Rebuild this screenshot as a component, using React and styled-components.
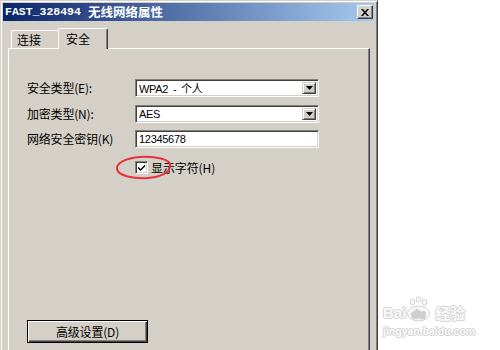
import React from 'react'
import styled, { createGlobalStyle } from 'styled-components'

const GlobalStyle = createGlobalStyle`
	html, body {
		margin: 0;
		padding: 0;
		background: #ffffff;
		overflow: hidden;
	}
	* {
		box-sizing: border-box;
	}
`

const FONT = `"Liberation Sans", "Noto Sans CJK SC", sans-serif`

const Page = styled.div`
	position: relative;
	width: 500px;
	height: 350px;
	overflow: hidden;
	font-family: ${FONT};
	font-size: 12px;
	color: #000;
`

const Window = styled.div`
	width: 378px;
	height: 370px;
	display: flex;
	flex-direction: column;
	background: #d4d0c8;
	border-top: 1px solid #d4d0c8;
	border-left: 1px solid #d4d0c8;
	border-right: 1px solid #404040;
	box-shadow: inset 1px 1px #ffffff, inset -1px 0 #808080;
	padding: 2px 3px 0 2px;
`

const TitleBar = styled.div`
	height: 18px;
	display: flex;
	align-items: center;
	justify-content: space-between;
	padding: 0 1px 0 2px;
	background: linear-gradient(to right, #0a246a, #a6caf0);
`

const Title = styled.div`
	display: flex;
	align-items: center;
	gap: 7px;
	color: #ffffff;
	font-weight: bold;
	line-height: 18px;
`

const TitleLatin = styled.span`
	font-family: "Liberation Mono", monospace;
	font-size: 11.5px;
`

const TitleCjk = styled.span`
	font-family: "Noto Sans CJK SC", sans-serif;
	font-size: 12.5px;
`

const CloseButton = styled.div`
	width: 16px;
	height: 14px;
	display: flex;
	align-items: center;
	justify-content: center;
	background: #d4d0c8;
	border-top: 1px solid #ffffff;
	border-left: 1px solid #ffffff;
	border-right: 1px solid #404040;
	border-bottom: 1px solid #404040;
	box-shadow: inset -1px -1px #808080;
`

const TabStrip = styled.div`
	display: flex;
	align-items: flex-end;
	height: 20px;
	margin-top: 7px;
	padding-left: 8px;
	position: relative;
	z-index: 1;
`

const Tab = styled.div`
	height: ${p => (p.active ? 21 : 18)}px;
	width: ${p => (p.active ? 50 : 47)}px;
	margin-bottom: ${p => (p.active ? -1 : 0)}px;
	display: flex;
	align-items: center;
	padding: 0 0 ${p => (p.active ? 2 : 0)}px ${p => (p.active ? 7 : 5)}px;
	background: #d4d0c8;
	border-top: 1px solid #ffffff;
	border-left: 1px solid #ffffff;
	border-right: ${p => (p.active ? '1px solid #404040' : 'none')};
	box-shadow: ${p => (p.active ? 'inset -1px 0 #808080' : 'none')};
	border-radius: 2px 2px 0 0;
	font-family: "Noto Sans CJK SC", sans-serif;
	font-size: 12px;
`

const Panel = styled.div`
	flex: 1;
	margin-left: 5px;
	width: 362px;
	display: flex;
	flex-direction: column;
	border-top: 1px solid #ffffff;
	border-left: 1px solid #ffffff;
	border-right: 1px solid #404040;
	box-shadow: inset -1px 0 #808080;
	padding: 30px 0 0 18px;
`

const Form = styled.div`
	display: grid;
	grid-template-columns: 108px 184px;
	grid-auto-rows: 18px;
	row-gap: 7.5px;
	align-items: center;
`

const Label = styled.div`
	font-family: "Noto Sans CJK SC", sans-serif;
	font-size: 12px;
	line-height: 18px;
	white-space: nowrap;
	letter-spacing: -0.2px;
`

const Field = styled.div`
	height: 18px;
	display: flex;
	align-items: center;
	justify-content: space-between;
	background: #ffffff;
	border-top: 1px solid #808080;
	border-left: 1px solid #808080;
	border-right: 1px solid #ffffff;
	border-bottom: 1px solid #ffffff;
	box-shadow: inset 1px 1px #404040, inset -1px -1px #d4d0c8;
	padding: 0 2px 0 3px;
	font-family: "Liberation Sans", "Noto Sans CJK SC", sans-serif;
	font-size: 11px;
	letter-spacing: -0.3px;
	word-spacing: 2px;
`

const DropButton = styled.div`
	width: 14px;
	height: 12px;
	display: flex;
	align-items: center;
	justify-content: center;
	background: #d4d0c8;
	border-top: 1px solid #d4d0c8;
	border-left: 1px solid #d4d0c8;
	border-right: 1px solid #404040;
	border-bottom: 1px solid #404040;
	box-shadow: inset 1px 1px #ffffff, inset -1px -1px #808080;
`

const CheckRow = styled.div`
	position: relative;
	display: flex;
	align-items: center;
	gap: 3px;
	margin: 13px 0 0 108px;
	height: 13px;
`

const CheckBox = styled.div`
	width: 13px;
	height: 13px;
	display: flex;
	align-items: center;
	justify-content: center;
	background: #ffffff;
	border-top: 1px solid #808080;
	border-left: 1px solid #808080;
	border-right: 1px solid #ffffff;
	border-bottom: 1px solid #ffffff;
	box-shadow: inset 1px 1px #404040, inset -1px -1px #d4d0c8;
`

const CheckLabel = styled.span`
	font-family: "Noto Sans CJK SC", sans-serif;
	font-size: 12px;
	letter-spacing: -0.1px;
`

const Circle = styled.svg`
	position: absolute;
	left: -21px;
	top: -7px;
	overflow: visible;
	pointer-events: none;
`

const PushButton = styled.div`
	width: 121px;
	height: 23px;
	margin-top: 146px;
	display: flex;
	align-items: center;
	justify-content: center;
	border: 1px solid #000000;
	box-shadow: inset 1px 1px #ffffff, inset -1px -1px #404040, inset -2px -2px #808080;
	font-family: "Noto Sans CJK SC", sans-serif;
	font-size: 12px;
	letter-spacing: -0.2px;
`

const OUTLINE = '1px 0 #d4d4d4, -1px 0 #d4d4d4, 0 1px #d4d4d4, 0 -1px #d4d4d4'

const Watermark = styled.div`
	position: absolute;
	left: 383px;
	top: 296px;
	display: flex;
	flex-direction: column;
	color: #fafafa;
	text-shadow: ${OUTLINE};
`

const WatermarkLogo = styled.div`
	display: flex;
	align-items: flex-end;
	font-family: "Liberation Sans", sans-serif;
	font-weight: bold;
	font-size: 15px;
	line-height: 18px;
`

const WatermarkSub = styled.span`
	font-family: "Noto Sans CJK SC", sans-serif;
	font-weight: bold;
	font-size: 15px;
	line-height: 18px;
	margin-left: 4px;
`

const WatermarkUrl = styled.div`
	font-family: "Liberation Sans", sans-serif;
	font-weight: bold;
	font-size: 10.5px;
	margin-top: 3px;
`

const Paw = () => (
	<svg width="25" height="26" viewBox="0 0 25 26">
		<g fill="#fafafa" stroke="#cfcfcf" strokeWidth="1">
			<ellipse cx="6.5" cy="6" rx="2.3" ry="2.8" />
			<ellipse cx="12.5" cy="3.5" rx="2.3" ry="2.8" />
			<ellipse cx="18.5" cy="6" rx="2.3" ry="2.8" />
			<ellipse cx="12.5" cy="17.5" rx="11" ry="7.5" />
		</g>
		<text x="12.5" y="21.5" textAnchor="middle" fontFamily="Liberation Sans, sans-serif" fontWeight="bold" fontSize="11" fill="#fafafa" stroke="#c8c8c8" strokeWidth="0.6">du</text>
	</svg>
)

const Arrow = () => (
	<DropButton>
		<svg width="7" height="4" viewBox="0 0 7 4">
			<path d="M0 0h7L3.5 4z" fill="#000" />
		</svg>
	</DropButton>
)

const App = () => (
	<Page>
		<GlobalStyle />
		<Window>
			<TitleBar>
				<Title>
					<TitleLatin>FAST_328494</TitleLatin>
					<TitleCjk>无线网络属性</TitleCjk>
				</Title>
				<CloseButton>
					<svg width="8" height="7" viewBox="0 0 8 7">
						<path d="M0 0h2l2 2.5L6 0h2L5 3.5 8 7H6L4 4.5 2 7H0l3-3.5z" fill="#000" />
					</svg>
				</CloseButton>
			</TitleBar>
			<TabStrip>
				<Tab>连接</Tab>
				<Tab active>安全</Tab>
			</TabStrip>
			<Panel>
				<Form>
					<Label>安全类型(E):</Label>
					<Field>
						<span>WPA2 - 个人</span>
						<Arrow />
					</Field>
					<Label>加密类型(N):</Label>
					<Field>
						<span>AES</span>
						<Arrow />
					</Field>
					<Label>网络安全密钥(K)</Label>
					<Field>
						<span>12345678</span>
					</Field>
				</Form>
				<CheckRow>
					<CheckBox>
						<svg width="7" height="7" viewBox="0 0 7 7">
							<path d="M0 2.5l2.5 2.5L7 0.5v2L2.5 7 0 4.5z" fill="#000" />
						</svg>
					</CheckBox>
					<CheckLabel>显示字符(H)</CheckLabel>
					<Circle width="60" height="26" viewBox="0 0 60 26">
						<path
							d="M56 12 C58 5 40 2 26 3 C12 4 2 9 3 15 C4 22 20 25 34 24 C46 23 55 19 56 13"
							fill="none"
							stroke="#e8303a"
							strokeWidth="2"
							strokeLinecap="round"
						/>
					</Circle>
				</CheckRow>
				<PushButton>高级设置(D)</PushButton>
			</Panel>
		</Window>
		<Watermark>
			<WatermarkLogo>
				<span>Bai</span>
				<Paw />
				<WatermarkSub>经验</WatermarkSub>
			</WatermarkLogo>
			<WatermarkUrl>jingyan.baidu.com</WatermarkUrl>
		</Watermark>
	</Page>
)

export default App
